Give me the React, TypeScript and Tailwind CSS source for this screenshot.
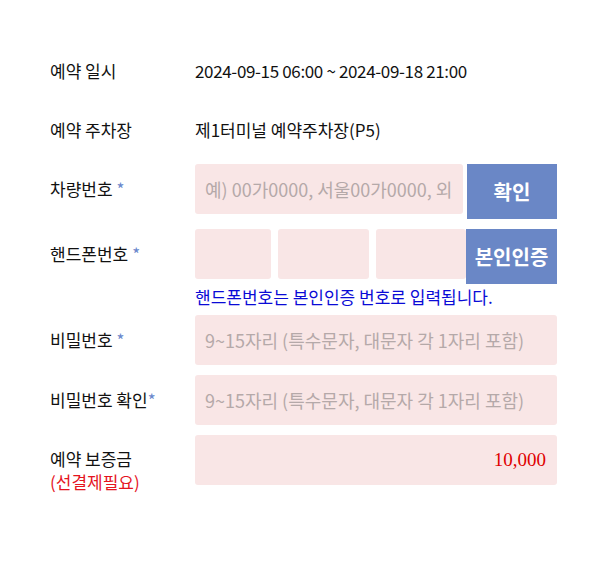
import { useState } from "react";

const font = { fontFamily: '"Noto Sans CJK KR", "Noto Sans", sans-serif' };

const inputClass =
  "h-[50px] rounded-[3px] bg-[#f9e6e6] px-[10px] text-[18px] text-[#333] outline-none placeholder:text-[#b5a9a9]";

function Required() {
  return <span className="ml-1 text-[#6a87cc]">*</span>;
}

export default function App() {
  const [car, setCar] = useState("");
  const [pw, setPw] = useState("");
  const [pw2, setPw2] = useState("");

  return (
    <main className="min-h-screen bg-white" style={font}>
      <div className="flex flex-col pl-[50px] pt-[41px] text-[#111]">
        {/* 예약 일시 */}
        <div className="flex h-[60px] items-center">
          <div className="w-[145px] text-[17px]">예약 일시</div>
          <div className="text-[17px] tracking-[-0.35px]">2024-09-15 06:00 ~ 2024-09-18 21:00</div>
        </div>

        {/* 예약 주차장 */}
        <div className="flex h-[58px] items-center">
          <div className="w-[145px] text-[17px]">예약 주차장</div>
          <div className="text-[17px]">제1터미널 예약주차장(P5)</div>
        </div>

        {/* 차량번호 */}
        <div className="mt-[5px] flex items-start">
          <div className="flex h-[50px] w-[145px] items-center text-[17px]">
            차량번호<Required />
          </div>
          <div className="flex w-[362px] gap-[4px]">
            <input
              value={car}
              onChange={(e) => setCar(e.target.value)}
              placeholder="예) 00가0000, 서울00가0000, 외"
              className={`${inputClass} w-[268px]`}
            />
            <button
              type="button"
              className="h-[55px] w-[90px] bg-[#6a87c6] text-[20px] font-bold text-white"
            >
              확인
            </button>
          </div>
        </div>

        {/* 핸드폰번호 */}
        <div className="mt-[10px] flex items-start">
          <div className="flex h-[50px] w-[145px] items-center text-[17px]">
            핸드폰번호<Required />
          </div>
          <div className="flex w-[362px]">
            <input className={`${inputClass} w-[76px]`} inputMode="numeric" />
            <input className={`${inputClass} ml-[7px] w-[91px]`} inputMode="numeric" />
            <input className={`${inputClass} ml-[7px] w-[90px]`} inputMode="numeric" />
            <button
              type="button"
              className="h-[55px] w-[91px] bg-[#6a87c6] text-[20px] font-bold whitespace-nowrap text-white"
            >
              본인인증
            </button>
          </div>
        </div>
        <p className="ml-[145px] h-[26px] text-[17px] leading-[26px] text-[#0a0ad6]">
          핸드폰번호는 본인인증 번호로 입력됩니다.
        </p>

        {/* 비밀번호 */}
        <div className="mt-[5px] flex items-center">
          <div className="w-[145px] text-[17px]">
            비밀번호<Required />
          </div>
          <input
            type="password"
            value={pw}
            onChange={(e) => setPw(e.target.value)}
            placeholder="9~15자리 (특수문자, 대문자 각 1자리 포함)"
            className={`${inputClass} w-[362px]`}
          />
        </div>

        {/* 비밀번호 확인 */}
        <div className="mt-[10px] flex items-center">
          <div className="w-[145px] text-[17px]">
            비밀번호 확인<span className="text-[#6a87cc]">*</span>
          </div>
          <input
            type="password"
            value={pw2}
            onChange={(e) => setPw2(e.target.value)}
            placeholder="9~15자리 (특수문자, 대문자 각 1자리 포함)"
            className={`${inputClass} w-[362px]`}
          />
        </div>

        {/* 예약 보증금 */}
        <div className="mt-[10px] flex items-start">
          <div className="w-[145px] pt-[12px] text-[17px] leading-[23px]">
            예약 보증금
            <br />
            <span className="text-[#e5141e]">(선결제필요)</span>
          </div>
          <div
            className="flex h-[50px] w-[362px] items-center justify-end rounded-[3px] bg-[#f9e6e6] px-[11px] text-[19px] text-[#e00000]"
            style={{ fontFamily: '"Liberation Serif", serif' }}
          >
            10,000
          </div>
        </div>
      </div>
    </main>
  );
}
